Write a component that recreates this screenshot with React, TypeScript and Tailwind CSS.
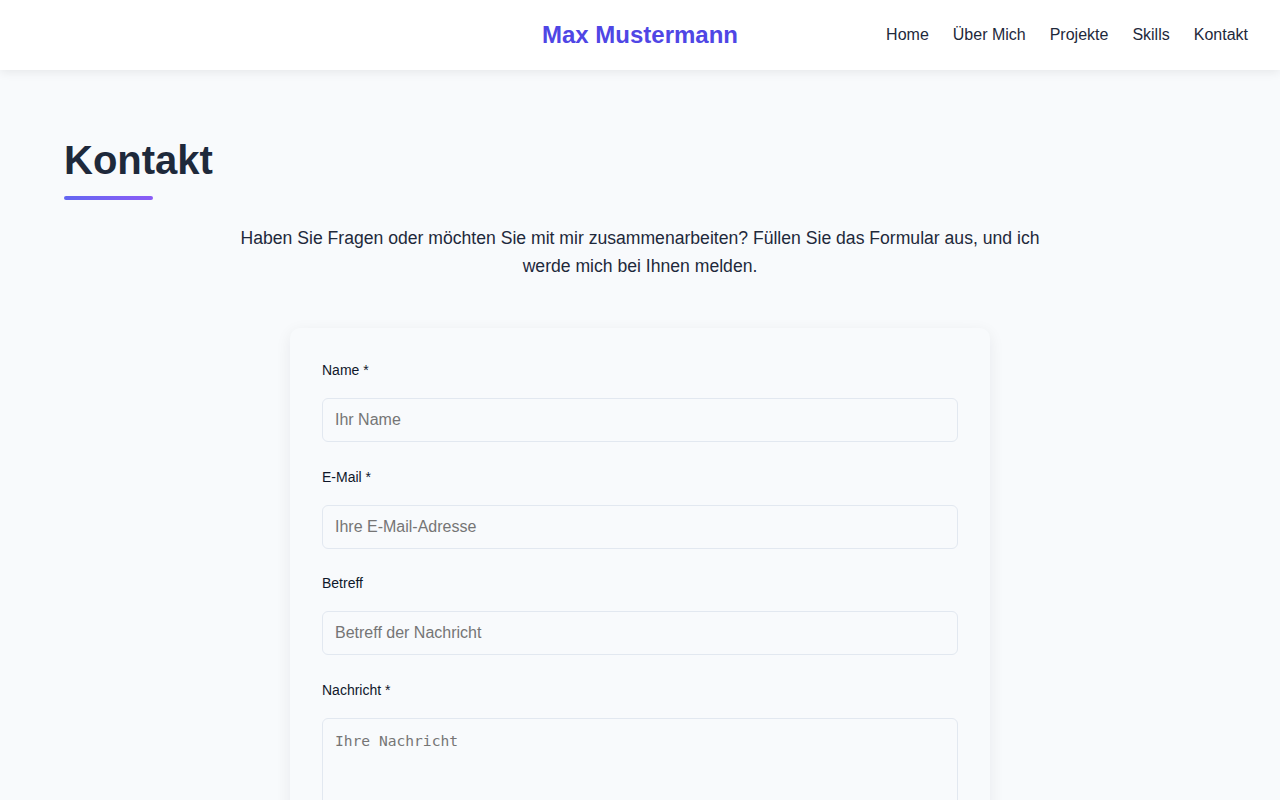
import React from 'react';

const navItems = ['Home', 'Über Mich', 'Projekte', 'Skills', 'Kontakt'];

const fields = [
  { label: 'Name *', placeholder: 'Ihr Name', type: 'text' },
  { label: 'E-Mail *', placeholder: 'Ihre E-Mail-Adresse', type: 'email' },
  { label: 'Betreff', placeholder: 'Betreff der Nachricht', type: 'text' },
];

export default function App() {
  return (
    <div className="min-h-screen bg-[#f8fafc] font-['Liberation_Sans',Arial,sans-serif] text-[#1e293b]">
      {/* Header */}
      <header className="grid h-[70px] grid-cols-3 items-center bg-white px-8 shadow-[0_2px_10px_rgba(0,0,0,0.08)]">
        <div />
        <div className="text-center text-2xl font-bold text-[#4f46e5]">Max Mustermann</div>
        <nav className="flex justify-end gap-6 text-base text-[#1e293b]">
          {navItems.map((item) => (
            <a key={item} href="#" className="hover:text-[#4f46e5]">
              {item}
            </a>
          ))}
        </nav>
      </header>

      {/* Kontakt section */}
      <main className="px-16 pt-[66px] pb-16">
        <h2 className="text-[40px] font-bold leading-[48px] text-[#1e293b]">Kontakt</h2>
        <div className="mt-3 h-1 w-[89px] rounded-full bg-gradient-to-r from-[#6366f1] to-[#8b5cf6]" />

        <p className="mx-auto mt-6 max-w-[800px] text-center text-[17.6px] leading-7 text-[#1e293b]">
          Haben Sie Fragen oder möchten Sie mit mir zusammenarbeiten? Füllen Sie das Formular aus, und ich werde mich bei
          Ihnen melden.
        </p>

        <form className="mx-auto mt-12 flex w-[700px] flex-col gap-[24.7px] rounded-[10px] bg-[#f8fafc] p-8 shadow-[0_4px_16px_rgba(15,23,42,0.07)]">
          {fields.map((f) => (
            <div key={f.label}>
              <label className="mb-[17px] block text-sm leading-[21px] text-[#0f172a]">{f.label}</label>
              <input
                type={f.type}
                placeholder={f.placeholder}
                className="block h-[44px] w-full rounded-md border border-[#e2e8f0] bg-[#f8fafc] px-3 text-base text-[#1e293b] outline-none placeholder:text-[#757575]"
              />
            </div>
          ))}
          <div>
            <label className="mb-[17px] block text-sm leading-[21px] text-[#0f172a]">Nachricht *</label>
            <textarea
              placeholder="Ihre Nachricht"
              rows={6}
              className="block h-[160px] w-full resize-y rounded-md border border-[#e2e8f0] bg-[#f8fafc] px-3 pt-[11px] font-['DejaVu_Sans_Mono',monospace] text-[14.6px] text-[#1e293b] outline-none placeholder:text-[#757575]"
            />
          </div>
        </form>
      </main>
    </div>
  );
}
